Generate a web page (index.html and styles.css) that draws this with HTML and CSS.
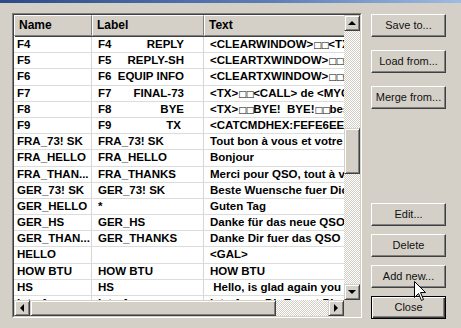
FILE: index.html
```html
<!DOCTYPE html>
<html>
<head>
<meta charset="utf-8">
<link rel="stylesheet" href="styles.css">
</head>
<body>
<div class="titlebar"></div>
<div class="dialog">
  <div class="listbox">
    <div class="view">
      <div class="grid">
        <div class="row head">
          <div class="hcell c1">Name</div>
          <div class="hcell c2">Label</div>
          <div class="hcell c3">Text</div>
        </div>
        <div class="row"><div class="cell c1">F4</div><div class="cell c2"><span class="lbl"><span>F4</span><span>REPLY</span></span></div><div class="cell c3">&lt;CLEARWINDOW&gt;<span class="bx">□□</span>&lt;TX&gt;</div></div>
        <div class="row"><div class="cell c1">F5</div><div class="cell c2"><span class="lbl"><span>F5</span><span>REPLY-SH</span></span></div><div class="cell c3">&lt;CLEARTXWINDOW&gt;<span class="bx">□□</span>&lt;TX&gt;</div></div>
        <div class="row"><div class="cell c1">F6</div><div class="cell c2"><span class="lbl"><span>F6</span><span>EQUIP INFO</span></span></div><div class="cell c3">&lt;CLEARTXWINDOW&gt;<span class="bx">□□</span>&lt;TX&gt;</div></div>
        <div class="row"><div class="cell c1">F7</div><div class="cell c2"><span class="lbl"><span>F7</span><span>FINAL-73</span></span></div><div class="cell c3">&lt;TX&gt;<span class="bx">□□</span>&lt;CALL&gt; de &lt;MYCALL&gt;</div></div>
        <div class="row"><div class="cell c1">F8</div><div class="cell c2"><span class="lbl"><span>F8</span><span>BYE</span></span></div><div class="cell c3">&lt;TX&gt;<span class="bx">□□</span>BYE!  BYE!<span class="bx">□□</span>best 73</div></div>
        <div class="row"><div class="cell c1">F9</div><div class="cell c2"><span class="lbl"><span>F9</span><span class="tx">TX</span></span></div><div class="cell c3">&lt;CATCMDHEX:FEFE6EE01C00FD&gt;</div></div>
        <div class="row"><div class="cell c1">FRA_73! SK</div><div class="cell c2">FRA_73! SK</div><div class="cell c3">Tout bon à vous et votre famille</div></div>
        <div class="row"><div class="cell c1">FRA_HELLO</div><div class="cell c2">FRA_HELLO</div><div class="cell c3">Bonjour</div></div>
        <div class="row"><div class="cell c1">FRA_THAN...</div><div class="cell c2">FRA_THANKS</div><div class="cell c3">Merci pour QSO, tout à vous</div></div>
        <div class="row"><div class="cell c1">GER_73! SK</div><div class="cell c2">GER_73! SK</div><div class="cell c3">Beste Wuensche fuer Dich</div></div>
        <div class="row"><div class="cell c1">GER_HELLO</div><div class="cell c2">*</div><div class="cell c3">Guten Tag</div></div>
        <div class="row"><div class="cell c1">GER_HS</div><div class="cell c2">GER_HS</div><div class="cell c3">Danke für das neue QSO</div></div>
        <div class="row"><div class="cell c1">GER_THAN...</div><div class="cell c2">GER_THANKS</div><div class="cell c3">Danke Dir fuer das QSO</div></div>
        <div class="row"><div class="cell c1">HELLO</div><div class="cell c2"></div><div class="cell c3">&lt;GAL&gt;</div></div>
        <div class="row"><div class="cell c1">HOW BTU</div><div class="cell c2">HOW BTU</div><div class="cell c3">HOW BTU</div></div>
        <div class="row"><div class="cell c1">HS</div><div class="cell c2">HS</div><div class="cell c3"> Hello, is glad again you</div></div>
        <div class="row"><div class="cell c1">Interface</div><div class="cell c2">Interface</div><div class="cell c3">Interface: DigExpert Plus</div></div>
      </div>
      <div class="vscroll">
        <div class="sbtn"><span class="arr up"></span></div>
        <div class="track t1"></div>
        <div class="thumb vthumb"></div>
        <div class="track t2"></div>
        <div class="sbtn"><span class="arr down"></span></div>
      </div>
    </div>
    <div class="hscroll">
      <div class="sbtn"><span class="arr left"></span></div>
      <div class="thumb hthumb"></div>
      <div class="track ht"></div>
      <div class="sbtn"><span class="arr right"></span></div>
      <div class="corner"></div>
    </div>
  </div>
  <div class="buttons">
    <div class="group top">
      <div class="btn">Save to...</div>
      <div class="btn">Load from...</div>
      <div class="btn">Merge from...</div>
    </div>
    <div class="group bottom">
      <div class="btn">Edit...</div>
      <div class="btn">Delete</div>
      <div class="btn">Add new...</div>
      <div class="btn default">Close</div>
    </div>
  </div>
</div>
<svg class="cursor" width="13" height="21" viewBox="0 0 13 21">
  <path d="M0.5,0.5 L0.5,16.5 L4.5,12.5 L7.5,19.5 L9.5,18.5 L6.5,11.5 L11.5,11.5 Z" fill="#fff" stroke="#000" stroke-width="1"/>
</svg>
</body>
</html>
```

FILE: styles.css
```css
html, body {
  margin: 0;
  padding: 0;
}
body {
  width: 461px;
  height: 328px;
  overflow: hidden;
  background: #d4d0c8;
  font-family: "Liberation Sans", Arial, sans-serif;
  position: relative;
}
.titlebar {
  height: 3px;
  background: linear-gradient(to right, #2c4b86, #5d7fb8 60%, #9fbbe0);
}
.dialog {
  display: flex;
  padding: 10px 0 0 12px;
}
.listbox {
  box-sizing: border-box;
  width: 350px;
  height: 305px;
  border: 1px solid;
  border-color: #808080 #ffffff #ffffff #808080;
  background: #fff;
  display: flex;
  flex-direction: column;
}
.listbox > * {
  flex: none;
}
.view {
  display: flex;
  height: 285px;
  border-top: 1px solid #404040;
  border-left: 1px solid #404040;
  border-right: 1px solid #d4d0c8;
}
.grid {
  width: 330px;
  height: 285px;
  overflow: hidden;
  background: #fff;
}
.row {
  display: grid;
  grid-template-columns: 78px 112px 200px;
  height: 16.2px;
  box-sizing: border-box;
}
.row.head {
  height: 22px;
}
.hcell {
  box-sizing: border-box;
  background: #d4d0c8;
  border: 1px solid;
  border-color: #ffffff #808080 #808080 #ffffff;
  box-shadow: 1px 1px 0 #404040;
  font-weight: bold;
  font-size: 12px;
  line-height: 19px;
  padding-left: 4px;
  color: #000;
  height: 21px;
}
.hcell.c3 {
  width: 141px;
}
.cell {
  box-sizing: border-box;
  font-weight: bold;
  font-size: 11.5px;
  line-height: 15px;
  height: 16.2px;
  border-right: 1px solid #d6d6d6;
  border-bottom: 1px solid #dcdcdc;
  padding-left: 3px;
  white-space: pre;
  overflow: hidden;
  color: #000;
}
.cell.c2 {
  padding-left: 6px;
}
.cell.c3 {
  padding-left: 6px;
  border-right: none;
}
.bx {
  font-family: "DejaVu Sans", sans-serif;
  font-weight: normal;
  font-size: 9px;
  letter-spacing: -1px;
}
.lbl {
  display: inline-flex;
  justify-content: space-between;
  width: 86px;
}
.lbl .tx {
  margin-right: 3px;
}
.vscroll {
  width: 16px;
  height: 285px;
  display: flex;
  flex-direction: column;
}
.sbtn {
  flex: none;
  box-sizing: border-box;
  width: 16px;
  height: 16px;
  background: #d4d0c8;
  border: 1px solid;
  border-color: #d4d0c8 #404040 #404040 #d4d0c8;
  box-shadow: inset 1px 1px 0 #ffffff, inset -1px -1px 0 #808080;
  display: flex;
  align-items: center;
  justify-content: center;
}
.arr {
  width: 0;
  height: 0;
  border: 4px solid transparent;
}
.arr.up {
  border-bottom-color: #000;
  border-top-width: 0;
  margin-top: -1px;
}
.arr.down {
  border-top-color: #000;
  border-bottom-width: 0;
}
.arr.left {
  border-right-color: #000;
  border-left-width: 0;
}
.arr.right {
  border-left-color: #000;
  border-right-width: 0;
}
.track {
  background-color: #ffffff;
  background-image: repeating-conic-gradient(#d4d0c8 0 25%, #ffffff 0 50%);
  background-size: 2px 2px;
}
.t1 {
  height: 97px;
  flex: none;
}
.t2 {
  flex: 1;
}
.thumb {
  box-sizing: border-box;
  background: #d4d0c8;
  border: 1px solid;
  border-color: #d4d0c8 #404040 #404040 #d4d0c8;
  box-shadow: inset 1px 1px 0 #ffffff, inset -1px -1px 0 #808080;
  flex: none;
}
.vthumb {
  height: 46px;
}
.hscroll {
  display: flex;
  border-left: 1px solid #404040;
  border-bottom: 1px solid #d4d0c8;
  border-right: 1px solid #d4d0c8;
  height: 17px;
  box-sizing: border-box;
  background: #d4d0c8;
}
.hscroll .sbtn {
  height: 16px;
}
.hthumb {
  width: 246px;
  height: 16px;
}
.ht {
  flex: 1;
  height: 16px;
}
.corner {
  width: 16px;
  height: 16px;
  background: #d4d0c8;
  flex: none;
}
.buttons {
  display: flex;
  flex-direction: column;
  margin-left: 9px;
  height: 306px;
}
.group {
  display: flex;
  flex-direction: column;
}
.group.top {
  gap: 13px;
  margin-top: 1px;
}
.group.bottom {
  gap: 8px;
  margin-top: auto;
}
.btn {
  box-sizing: border-box;
  width: 75px;
  height: 23px;
  background: #d4d0c8;
  border: 1px solid;
  border-color: #ffffff #404040 #404040 #ffffff;
  box-shadow: inset -1px -1px 0 #808080;
  font-size: 11px;
  color: #111;
  display: flex;
  align-items: center;
  justify-content: center;
  padding-bottom: 1px;
}
.btn.default {
  border: 1px solid #000;
  box-shadow: inset 1px 1px 0 #ffffff, inset -1px -1px 0 #404040, inset -2px -2px 0 #808080;
}
.cursor {
  position: absolute;
  left: 414px;
  top: 281px;
}
```
